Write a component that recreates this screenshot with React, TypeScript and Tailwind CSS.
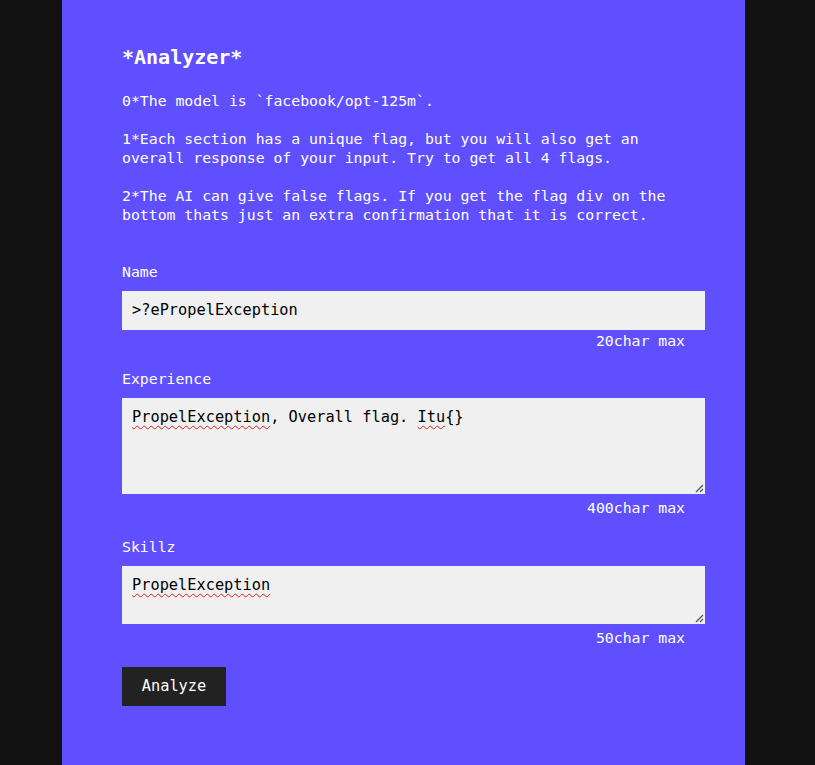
import React from 'react';

const mono = { fontFamily: '"DejaVu Sans Mono", "Liberation Mono", monospace' };

function Grip() {
    return (
        <svg className="absolute bottom-[1px] right-[1px]" width="10" height="10" viewBox="0 0 10 10">
            <line x1="9" y1="2" x2="2" y2="9" stroke="#555" strokeWidth="1.2" />
            <line x1="9" y1="6" x2="6" y2="9" stroke="#555" strokeWidth="1.2" />
        </svg>
    );
}

function Squiggle({ children }: { children: React.ReactNode }) {
    return (
        <span className="underline decoration-wavy decoration-[#e02020] decoration-1 underline-offset-[3px]">
            {children}
        </span>
    );
}

function Limit({ text, mt }: { text: string; mt: string }) {
    return (
        <div className={`${mt} pr-[20px] text-right leading-[19px] text-[14.8px]`}>{text}</div>
    );
}

export default function App() {
    const intro =
        '0*The model is `facebook/opt-125m`.\n\n1*Each section has a unique flag, but you will also get an\noverall response of your input. Try to get all 4 flags.\n\n2*The AI can give false flags. If you get the flag div on the\nbottom thats just an extra confirmation that it is correct.';

    return (
        <div className="min-h-[765px] bg-[#111111] flex" style={mono}>
            <div className="ml-[62px] w-[683px] min-h-[765px] bg-[#5f4fff] text-white pl-[60px] pt-[42px]">
                <div className="w-[583px]">
                    <h1 className="text-[20px] font-bold leading-[30px]">*Analyzer*</h1>

                    <p className="mt-[19px] whitespace-pre-wrap text-[14.8px] leading-[19px]">{intro}</p>

                    <div className="mt-[38px] text-[14.8px] leading-[19px]">Name</div>
                    <div className="mt-[10px] h-[39px] bg-[#f0f0f0] px-[10px] py-[10px] text-black text-[15.3px] leading-[19px]">
                        &gt;?ePropelException
                    </div>
                    <Limit text="20char max" mt="mt-[1px]" />

                    <div className="mt-[19px] text-[14.8px] leading-[19px]">Experience</div>
                    <div className="relative mt-[10px] h-[96px] bg-[#f0f0f0] px-[10px] py-[10px] text-black text-[15.3px] leading-[19px]">
                        <Squiggle>PropelException</Squiggle>, Overall flag. <Squiggle>Itu</Squiggle>{'{}'}
                        <Grip />
                    </div>
                    <Limit text="400char max" mt="mt-[4px]" />

                    <div className="mt-[20px] text-[14.8px] leading-[19px]">Skillz</div>
                    <div className="relative mt-[10px] h-[58px] bg-[#f0f0f0] px-[10px] py-[10px] text-black text-[15.3px] leading-[19px]">
                        <Squiggle>PropelException</Squiggle>
                        <Grip />
                    </div>
                    <Limit text="50char max" mt="mt-[4px]" />

                    <button className="mt-[20px] h-[39px] w-[104px] bg-[#222222] text-white text-[15.3px] leading-[19px]">
                        Analyze
                    </button>
                </div>
            </div>
        </div>
    );
}
